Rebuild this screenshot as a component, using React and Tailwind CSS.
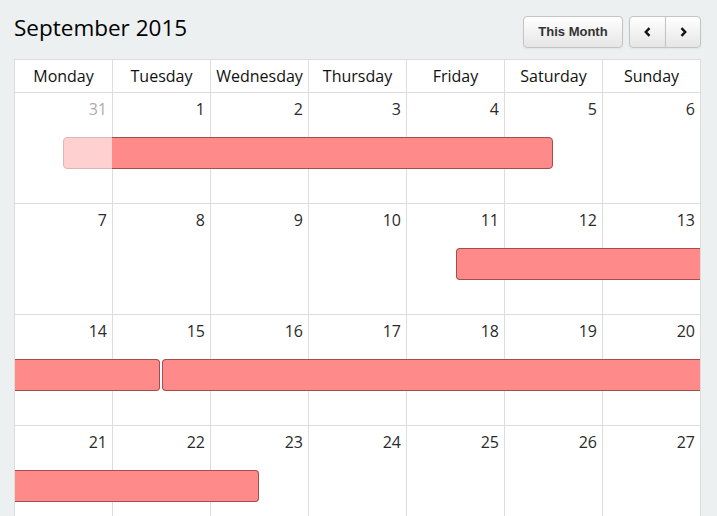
import React from 'react';

const DAYS = ['Monday', 'Tuesday', 'Wednesday', 'Thursday', 'Friday', 'Saturday', 'Sunday'];

// one entry per week, `muted` marks days from another month
const WEEKS = [
    { days: [31, 1, 2, 3, 4, 5, 6], muted: [0] },
    { days: [7, 8, 9, 10, 11, 12, 13], muted: [] },
    { days: [14, 15, 16, 17, 18, 19, 20], muted: [] },
    { days: [21, 22, 23, 24, 25, 26, 27], muted: [] },
];

// bars sit on a grid of half-day columns (14 per week)
const EVENTS = [
    [{ cls: 'col-start-2 col-end-12 rounded-[4px] border' }],
    [{ cls: 'col-start-10 col-end-15 ml-[1px] rounded-l-[4px] border-l border-y' }],
    [
        { cls: 'col-start-1 col-end-4 ml-[1px] mr-[1px] rounded-r-[4px] border-r border-y' },
        { cls: 'col-start-4 col-end-15 ml-[1px] rounded-l-[4px] border-l border-y' },
    ],
    [{ cls: 'col-start-1 col-end-6 ml-[1px] rounded-r-[4px] border-r border-y' }],
];

function Chevron({ dir }) {
    return (
        <svg width="7" height="10" viewBox="0 0 7 10" fill="none">
            <path
                d={dir === 'left' ? 'M5.5 1.2 L1.8 5 L5.5 8.8' : 'M1.5 1.2 L5.2 5 L1.5 8.8'}
                stroke="#111"
                strokeWidth="2.4"
            />
        </svg>
    );
}

export default function App() {
    const btn =
        'h-[32px] bg-gradient-to-b from-white to-[#e6e6e6] border border-[#c4c4c4] text-[#333] shadow-[inset_0_1px_0_rgba(255,255,255,0.6),0_1px_2px_rgba(0,0,0,0.05)] flex items-center justify-center';

    return (
        <div className="h-screen overflow-hidden bg-[#ecf0f1] pl-[14px] font-['Open_Sans',sans-serif] text-[#333]">
            {/* Toolbar */}
            <div className="w-[687px] h-[59px] pt-[13px] flex justify-between items-start">
                <h2 className="text-[22.5px] leading-[30px] text-[#000]">September 2015</h2>
                <div className="flex gap-[6px] mt-[3px] font-['Liberation_Sans',Arial,sans-serif] text-[13px] font-bold">
                    <button className={`${btn} w-[100px] rounded-[4px]`}>This Month</button>
                    <div className="flex">
                        <button className={`${btn} w-[37px] rounded-l-[4px]`}>
                            <Chevron dir="left" />
                        </button>
                        <button className={`${btn} w-[36px] -ml-px rounded-r-[4px]`}>
                            <Chevron dir="right" />
                        </button>
                    </div>
                </div>
            </div>

            {/* Calendar */}
            <div className="w-[687px] border-l border-t border-[#ddd] bg-white">
                <div className="grid grid-cols-[repeat(7,98px)]">
                    {DAYS.map(d => (
                        <div
                            key={d}
                            className="h-[33px] border-r border-b border-[#ddd] text-center text-[16px] leading-[32px] text-[#111]"
                        >
                            {d}
                        </div>
                    ))}
                </div>

                {WEEKS.map((week, w) => (
                    <div key={w} className="relative">
                        <div className="grid grid-cols-[repeat(7,98px)]">
                            {week.days.map((n, i) => (
                                <div
                                    key={i}
                                    className="h-[111px] border-r border-b border-[#ddd] pt-[5px] pr-[5px] text-right text-[16px] leading-[22px] text-[#2a2a2a]"
                                >
                                    {n}
                                </div>
                            ))}
                        </div>

                        {/* Events */}
                        <div className="absolute top-[44px] -left-px w-[686px] overflow-hidden grid grid-cols-[repeat(14,49px)]">
                            {EVENTS[w].map((ev, k) => (
                                <div key={k} className={`h-[32px] bg-[#ff8a8a] border-[#a54c4c] ${ev.cls}`} />
                            ))}
                        </div>

                        {/* Other-month days are washed out */}
                        {week.muted.map(i => (
                            <div
                                key={i}
                                className="absolute top-0 left-0 w-[97px] h-[110px] bg-white/60"
                            />
                        ))}
                    </div>
                ))}
            </div>
        </div>
    );
}
